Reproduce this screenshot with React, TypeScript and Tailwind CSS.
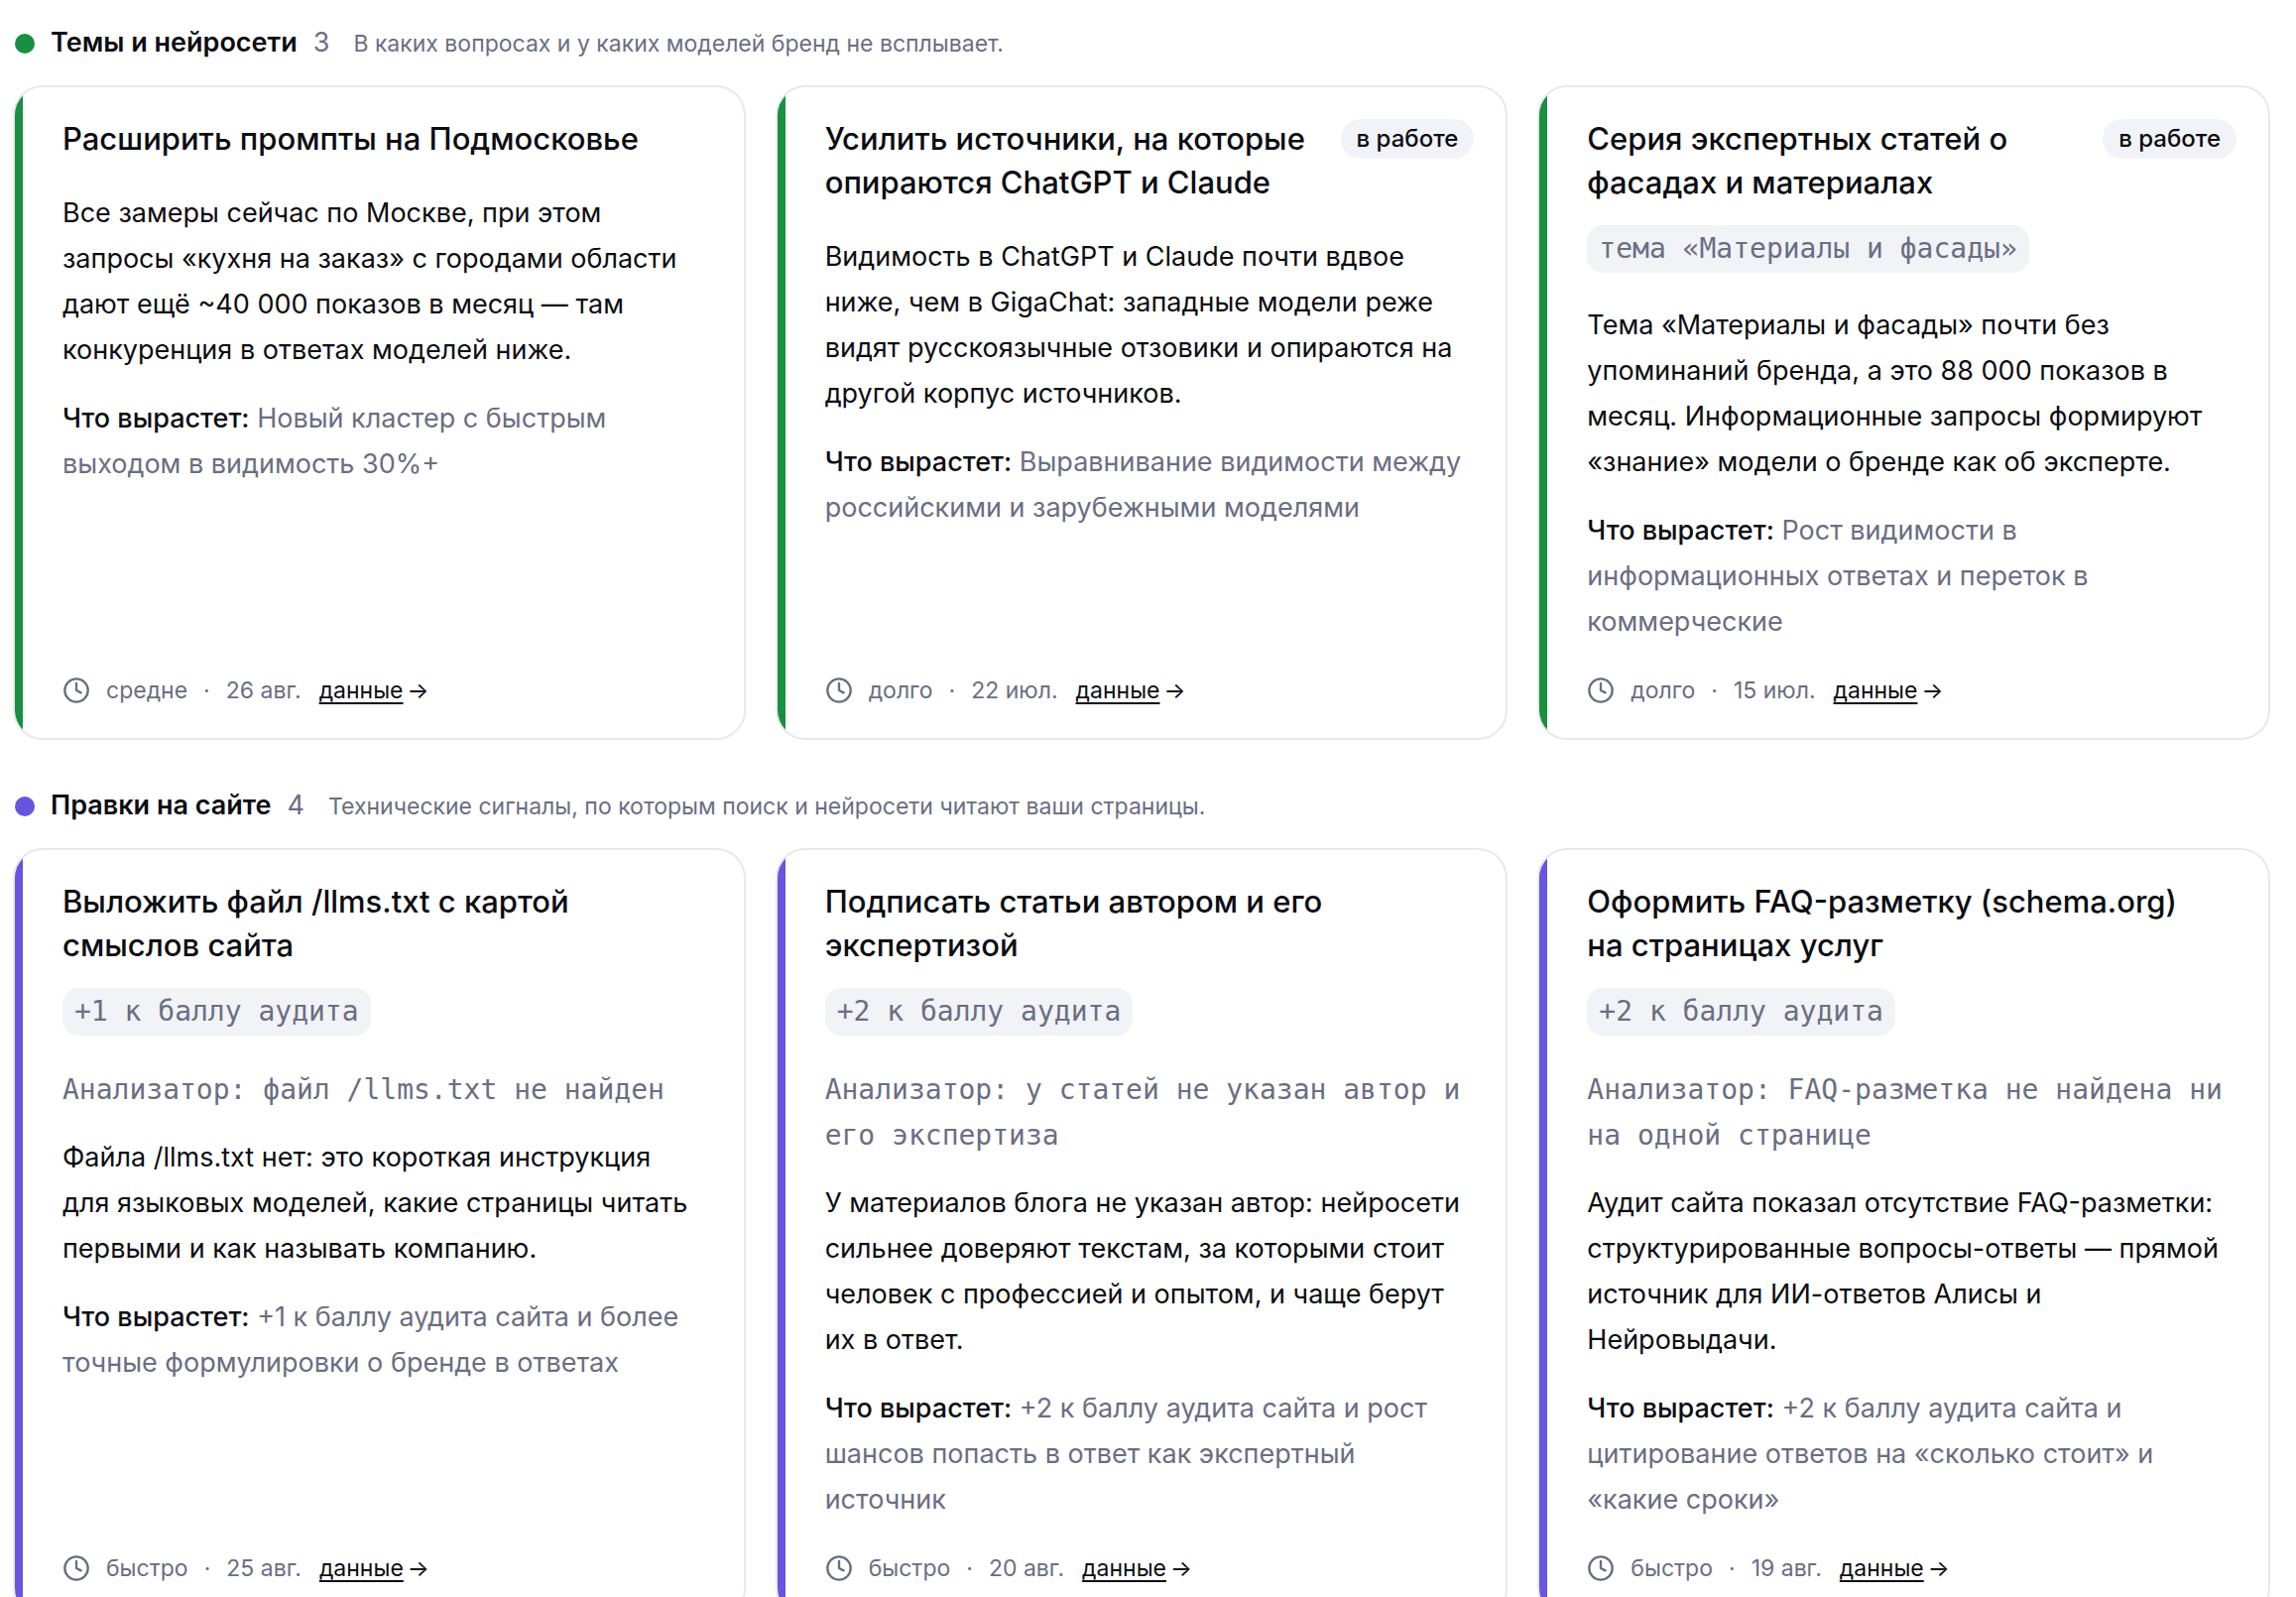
import { Clock } from "lucide-react";

type Task = {
    title: string;
    inWork?: boolean;
    chip?: string;
    analyzer?: string;
    text: string;
    growth: string;
    speed: string;
    date: string;
}

type SectionProps = {
    title: string;
    hint: string;
    count: number;
    color: string;
    tasks: Task[];
}

const topicTasks: Task[] = [
    {
        title: "Расширить промпты на Подмосковье",
        text: "Все замеры сейчас по Москве, при этом запросы «кухня на заказ» с городами области дают ещё ~40 000 показов в месяц — там конкуренция в ответах моделей ниже.",
        growth: "Новый кластер с быстрым выходом в видимость 30%+",
        speed: "средне",
        date: "26 авг.",
    },
    {
        title: "Усилить источники, на которые опираются ChatGPT и Claude",
        inWork: true,
        text: "Видимость в ChatGPT и Claude почти вдвое ниже, чем в GigaChat: западные модели реже видят русскоязычные отзовики и опираются на другой корпус источников.",
        growth: "Выравнивание видимости между российскими и зарубежными моделями",
        speed: "долго",
        date: "22 июл.",
    },
    {
        title: "Серия экспертных статей о фасадах и материалах",
        inWork: true,
        chip: "тема «Материалы и фасады»",
        text: "Тема «Материалы и фасады» почти без упоминаний бренда, а это 88 000 показов в месяц. Информационные запросы формируют «знание» модели о бренде как об эксперте.",
        growth: "Рост видимости в информационных ответах и переток в коммерческие",
        speed: "долго",
        date: "15 июл.",
    },
];

const siteTasks: Task[] = [
    {
        title: "Выложить файл /llms.txt с картой смыслов сайта",
        chip: "+1 к баллу аудита",
        analyzer: "Анализатор: файл /llms.txt не найден",
        text: "Файла /llms.txt нет: это короткая инструкция для\u00a0языковых моделей, какие страницы читать первыми и как называть компанию.",
        growth: "+1 к баллу аудита сайта и более точные формулировки о бренде в ответах",
        speed: "быстро",
        date: "25 авг.",
    },
    {
        title: "Подписать статьи автором и его экспертизой",
        chip: "+2 к баллу аудита",
        analyzer: "Анализатор: у статей не указан автор и его экспертиза",
        text: "У материалов блога не указан автор: нейросети сильнее доверяют текстам, за которыми стоит человек с профессией и опытом, и чаще берут их в ответ.",
        growth: "+2 к баллу аудита сайта и рост шансов попасть в ответ как экспертный источник",
        speed: "быстро",
        date: "20 авг.",
    },
    {
        title: "Оформить FAQ-разметку (schema.org) на\u00a0страницах услуг",
        chip: "+2 к баллу аудита",
        analyzer: "Анализатор: FAQ-разметка не найдена ни на одной странице",
        text: "Аудит сайта показал отсутствие FAQ-разметки: структурированные вопросы-ответы — прямой источник для ИИ-ответов Алисы и Нейровыдачи.",
        growth: "+2 к баллу аудита сайта и цитирование ответов на «сколько стоит» и «какие сроки»",
        speed: "быстро",
        date: "19 авг.",
    },
];

function TaskCard({ task, color }: { task: Task; color: string }) {
    return (
        <article className="flex overflow-hidden rounded-[30px] border-2 border-[#e9e9ec] bg-white">
            <div className={`w-2 shrink-0 ${color}`} />
            <div className="flex min-w-0 flex-1 flex-col pt-[30px] pr-8 pb-[30px] pl-10">
                <div className="flex items-start justify-between gap-6">
                    <h3 className="text-[31px] leading-[44px] font-medium">{task.title}</h3>
                    {task.inWork && (
                        <span className="mt-[2px] shrink-0 rounded-full bg-[#f2f3f8] px-4 text-[24px] leading-[40px] font-medium">
                            в работе
                        </span>
                    )}
                </div>
                {task.chip && (
                    <span className="mt-[21px] self-start rounded-2xl bg-[#f1f3f7] px-3 font-['DejaVu_Sans_Mono',monospace] text-[28px] leading-[48px] text-[#6a6e83]">
                        {task.chip}
                    </span>
                )}
                {task.analyzer && (
                    <p className="mt-8 -mb-2 font-['DejaVu_Sans_Mono',monospace] text-[28px] leading-[46px] text-[#6a6e83]">
                        {task.analyzer}
                    </p>
                )}
                <p className="mt-[30px] text-[27px] leading-[46px]">{task.text}</p>
                <p className="mt-[23px] text-[27px] leading-[46px] text-[#6a6e83]">
                    <b className="font-medium text-[#0c0d12]">Что вырастет:</b> {task.growth}
                </p>
                <div className="mt-auto flex items-center pt-7 text-[23px] leading-[36px] text-[#6a6e83]">
                    <Clock className="mr-4 size-7" strokeWidth={2} />
                    <span>{task.speed}</span>
                    <span className="mx-4">·</span>
                    <span>{task.date}</span>
                    <a href="#" className="ml-[18px] flex gap-1 text-[#0c0d12]">
                        <span className="underline decoration-2 underline-offset-4">данные</span>
                        <span>→</span>
                    </a>
                </div>
            </div>
        </article>
    );
}

function Section({ title, hint, count, color, tasks }: SectionProps) {
    return (
        <section>
            <div className="flex items-baseline pl-[2px]">
                <span className={`size-5 self-center rounded-full ${color}`} />
                <h2 className="ml-4 text-[27px] leading-[36px] font-semibold">{title}</h2>
                <span className="ml-4 text-[27px] leading-[36px] text-[#6a6e83]">{count}</span>
                <p className="ml-6 text-[23px] leading-[36px] text-[#6a6e83]">{hint}</p>
            </div>
            <div className="mt-6 grid grid-cols-3 gap-[30px]">
                {tasks.map((task) => (
                    <TaskCard key={task.title} task={task} color={color} />
                ))}
            </div>
        </section>
    );
}

export default function App() {
    return (
        <main className="flex h-screen flex-col gap-12 overflow-hidden bg-white pt-[25px] pr-[26px] pl-[13px] font-['Inter',sans-serif] text-[#0c0d12]">
            <Section
                title="Темы и нейросети"
                hint="В каких вопросах и у каких моделей бренд не всплывает."
                count={3}
                color="bg-[#188f42]"
                tasks={topicTasks}
            />
            <Section
                title="Правки на сайте"
                hint="Технические сигналы, по которым поиск и нейросети читают ваши страницы."
                count={4}
                color="bg-[#6655e0]"
                tasks={siteTasks}
            />
        </main>
    );
}
